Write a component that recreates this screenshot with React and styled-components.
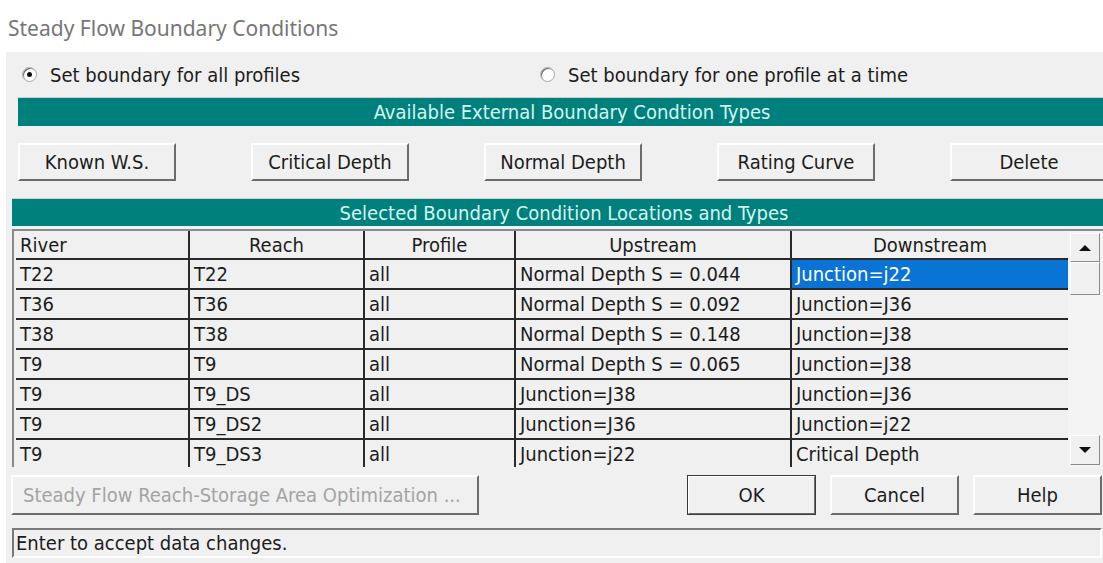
import React, { useState } from 'react';
import styled, { createGlobalStyle } from 'styled-components';

const GlobalStyle = createGlobalStyle`
  html, body {
    margin: 0;
    padding: 0;
    background: #fff;
    overflow: hidden;
  }
`;

const Page = styled.div`
  width: 1103px;
  height: 563px;
  overflow: hidden;
  font-family: "DejaVu Sans Condensed", "DejaVu Sans", sans-serif;
  font-size: 20px;
  color: #1c1c1c;
`;

const Title = styled.div`
  height: 52px;
  padding-left: 8px;
  box-sizing: border-box;
  display: flex;
  align-items: center;
  padding-top: 4px;
  font-family: "Noto Sans", sans-serif;
  font-size: 21px;
  color: #767676;
`;

const Dialog = styled.div`
  margin-left: 6px;
  width: 1120px;
  height: 511px;
  background: #f0f0f0;
  box-sizing: border-box;
`;

const RadioRow = styled.div`
  height: 45px;
  display: flex;
  align-items: center;
  padding-left: 16px;
`;

const RadioLabel = styled.label`
  display: flex;
  align-items: center;
  gap: 13px;
  width: ${p => p.$w}px;
  cursor: default;
`;

const RadioDot = styled.span`
  width: 15px;
  height: 15px;
  box-sizing: border-box;
  border-radius: 50%;
  background: #fff;
  border: 1px solid #a8a8a8;
  box-shadow: inset 1px 1px 0 #6a6a6a;
  display: flex;
  align-items: center;
  justify-content: center;
  &::after {
    content: '';
    width: 5px;
    height: 5px;
    border-radius: 50%;
    background: ${p => (p.$on ? '#111' : 'transparent')};
  }
`;

const Banner = styled.div`
  margin-left: ${p => p.$inset}px;
  height: ${p => p.$h}px;
  background: #00807c;
  color: #d4f4f0;
  display: flex;
  align-items: center;
  justify-content: center;
  padding-right: ${p => p.$shift}px;
  box-sizing: border-box;
  border-top: 1px solid #cfcfcf;
`;

const TypeRow = styled.div`
  display: flex;
  justify-content: space-between;
  width: 1090px;
  margin: 17px 0 0 12px;
  height: 38px;
`;

const Btn = styled.button`
  width: ${p => p.$w || 158}px;
  height: ${p => p.$h || 38}px;
  background: #f0f0f0;
  font: inherit;
  color: ${p => (p.$disabled ? '#a3a3a3' : '#1c1c1c')};
  border: 2px solid;
  border-color: #fdfdfd #6c6c6c #6c6c6c #fdfdfd;
  outline: ${p => (p.$default ? '1px solid #3a3a3a' : 'none')};
  outline-offset: -1px;
  padding: 0;
  text-align: ${p => (p.$left ? 'left' : 'center')};
  padding-left: ${p => (p.$left ? 10 : 0)}px;
  white-space: nowrap;
  cursor: default;
`;

const TableWrap = styled.div`
  margin: 3px 0 0 6px;
  width: 1097px;
  height: 238px;
  display: flex;
  border-left: 2px solid #8a8a8a;
  border-top: 2px solid #8a8a8a;
  box-sizing: border-box;
  overflow: hidden;
`;

const Grid = styled.div`
  width: 1054px;
  border-right: 2px solid #222;
  box-sizing: border-box;
  padding-left: 2px;
`;

const cols = '174px 175px 151px 276px 276px';

const Row = styled.div`
  display: grid;
  grid-template-columns: ${cols};
  height: ${p => (p.$head ? 29 : 30)}px;
  box-sizing: border-box;
  border-bottom: 2px solid #2a2a2a;
`;

const Cell = styled.div`
  display: flex;
  align-items: center;
  justify-content: ${p => (p.$center ? 'center' : 'flex-start')};
  padding-left: ${p => (p.$center ? 0 : 4)}px;
  border-right: ${p => (p.$last ? 'none' : '2px solid #2a2a2a')};
  background: ${p => (p.$sel ? '#0a74d6' : '#f0f0f0')};
  color: ${p => (p.$sel ? '#fff' : '#1c1c1c')};
  white-space: nowrap;
  overflow: hidden;
`;

const Scroll = styled.div`
  width: 35px;
  display: flex;
  flex-direction: column;
  padding: 2px 0 0 2px;
  box-sizing: border-box;
  background: #f4f4f4;
`;

const ScrollBtn = styled.div`
  width: 30px;
  height: ${p => p.$h}px;
  background: #f0f0f0;
  border: 1px solid;
  border-color: #fff #8a8a8a #8a8a8a #fff;
  box-sizing: border-box;
  display: flex;
  align-items: center;
  justify-content: center;
  margin-top: ${p => p.$mt || 0}px;
`;

const Arrow = styled.span`
  width: 0;
  height: 0;
  border-left: 6px solid transparent;
  border-right: 6px solid transparent;
  ${p => (p.$up ? 'border-bottom: 6px solid #111;' : 'border-top: 6px solid #111;')}
`;

const BottomRow = styled.div`
  display: flex;
  align-items: center;
  margin: 8px 0 0 5px;
  height: 40px;
`;

const Spacer = styled.div`
  flex: 0 0 ${p => p.$w}px;
`;

const Status = styled.div`
  margin: 13px 0 0 6px;
  width: 1090px;
  height: 30px;
  box-sizing: border-box;
  border: 2px solid;
  border-color: #7a7a7a #fdfdfd #fdfdfd #7a7a7a;
  display: flex;
  align-items: center;
  padding-left: 2px;
`;

const rows = [
  ['T22', 'T22', 'all', 'Normal Depth S = 0.044', 'Junction=j22'],
  ['T36', 'T36', 'all', 'Normal Depth S = 0.092', 'Junction=J36'],
  ['T38', 'T38', 'all', 'Normal Depth S = 0.148', 'Junction=J38'],
  ['T9', 'T9', 'all', 'Normal Depth S = 0.065', 'Junction=J38'],
  ['T9', 'T9_DS', 'all', 'Junction=J38', 'Junction=J36'],
  ['T9', 'T9_DS2', 'all', 'Junction=J36', 'Junction=j22'],
  ['T9', 'T9_DS3', 'all', 'Junction=j22', 'Critical Depth'],
];

const types = ['Known W.S.', 'Critical Depth', 'Normal Depth', 'Rating Curve', 'Delete'];

export default function App() {
  const [allProfiles, setAllProfiles] = useState(true);
  const [sel, setSel] = useState([0, 4]);

  return (
    <Page>
      <GlobalStyle />
      <Title>Steady Flow Boundary Conditions</Title>
      <Dialog>
        <RadioRow>
          <RadioLabel $w={518} onClick={() => setAllProfiles(true)}>
            <RadioDot $on={allProfiles} />
            Set boundary for all profiles
          </RadioLabel>
          <RadioLabel $w={420} onClick={() => setAllProfiles(false)}>
            <RadioDot $on={!allProfiles} />
            Set boundary for one profile at a time
          </RadioLabel>
        </RadioRow>

        <Banner $inset={12} $h={29} $shift={0}>
          Available External Boundary Condtion Types
        </Banner>

        <TypeRow>
          {types.map(t => (
            <Btn key={t}>{t}</Btn>
          ))}
        </TypeRow>

        <Banner $inset={6} $h={28} $shift={10} style={{ marginTop: 17 }}>
          Selected Boundary Condition Locations and Types
        </Banner>

        <TableWrap>
          <Grid>
            <Row $head>
              <Cell>River</Cell>
              <Cell $center>Reach</Cell>
              <Cell $center>Profile</Cell>
              <Cell $center>Upstream</Cell>
              <Cell $center $last>Downstream</Cell>
            </Row>
            {rows.map((r, i) => (
              <Row key={i}>
                {r.map((v, j) => (
                  <Cell
                    key={j}
                    $last={j === 4}
                    $sel={sel[0] === i && sel[1] === j}
                    onClick={() => setSel([i, j])}
                  >
                    {v}
                  </Cell>
                ))}
              </Row>
            ))}
          </Grid>
          <Scroll>
            <ScrollBtn $h={29}>
              <Arrow $up />
            </ScrollBtn>
            <ScrollBtn $h={33} />
            <ScrollBtn $h={30} $mt={140}>
              <Arrow />
            </ScrollBtn>
          </Scroll>
        </TableWrap>

        <BottomRow>
          <Btn $w={468} $h={40} $disabled $left>
            Steady Flow Reach-Storage Area Optimization ...
          </Btn>
          <Spacer $w={208} />
          <Btn $w={129} $h={40} $default>OK</Btn>
          <Spacer $w={14} />
          <Btn $w={129} $h={40}>Cancel</Btn>
          <Spacer $w={14} />
          <Btn $w={129} $h={40}>Help</Btn>
        </BottomRow>

        <Status>Enter to accept data changes.</Status>
      </Dialog>
    </Page>
  );
}
